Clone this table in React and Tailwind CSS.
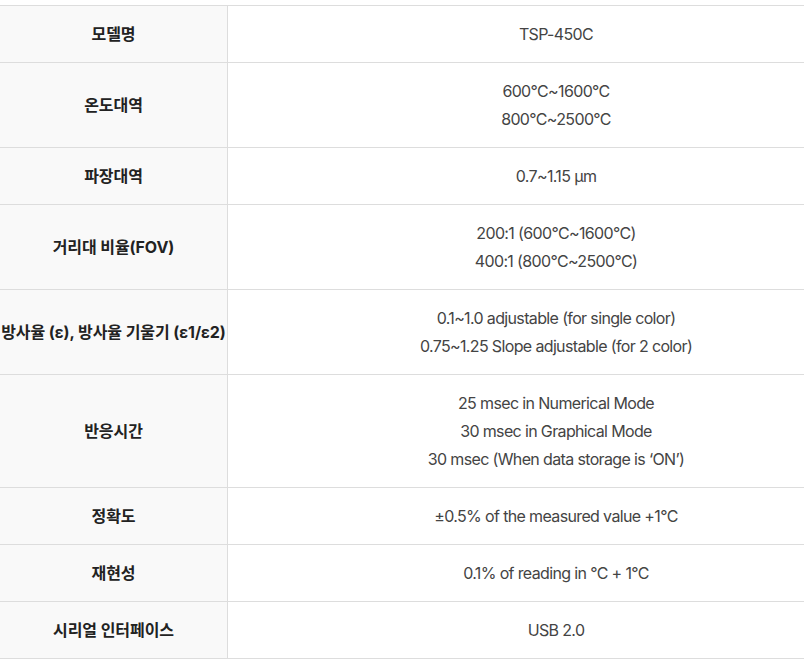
import React from 'react';

const rows = [
  { label: '모델명', lines: ['TSP-450C'] },
  { label: '온도대역', lines: ['600°C~1600°C', '800°C~2500°C'] },
  { label: '파장대역', lines: ['0.7~1.15 µm'] },
  { label: '거리대 비율(FOV)', lines: ['200:1 (600°C~1600°C)', '400:1 (800°C~2500°C)'] },
  { label: '방사율 (ε), 방사율 기울기 (ε1/ε2)', lines: ['0.1~1.0 adjustable (for single color)', '0.75~1.25 Slope adjustable (for 2 color)'] },
  { label: '반응시간', lines: ['25 msec in Numerical Mode', '30 msec in Graphical Mode', '30 msec (When data storage is ‘ON’)'] },
  { label: '정확도', lines: ['±0.5% of the measured value +1°C'] },
  { label: '재현성', lines: ['0.1% of reading in °C + 1°C'] },
  { label: '시리얼 인터페이스', lines: ['USB 2.0'] },
];

const App = () => {
  return (
    <div className="w-[804px] h-[665px] bg-white pt-[5px] overflow-hidden"
      style={{ fontFamily: 'Inter, "Noto Sans CJK KR", sans-serif' }}>
      <div className="w-[884px] border-t border-[#dddddd]">
        {rows.map((row) => (
          <div key={row.label} className="grid grid-cols-[228px_1fr] border-b border-[#dddddd]">
            <div className="bg-[#f9f9f9] border-r border-[#dddddd] flex items-center justify-center py-[14px] whitespace-nowrap text-[16px] leading-[28px] font-bold text-[#222222] tracking-[-0.005em]">
              {row.label}
            </div>
            <div className="flex flex-col items-center justify-center py-[14px] text-[16px] leading-[28px] text-[#444444] tracking-[-0.04em]">
              {row.lines.map((l) => (
                <span key={l}>{l}</span>
              ))}
            </div>
          </div>
        ))}
      </div>
    </div>
  );
};

export default App;
